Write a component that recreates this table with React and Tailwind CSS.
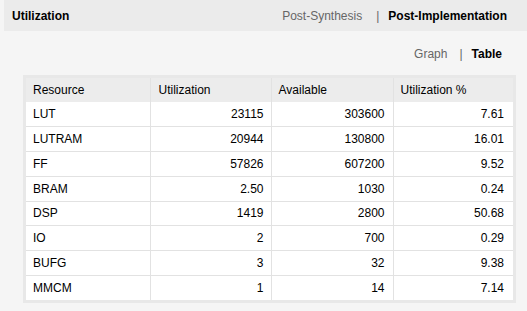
const rows = [
  ["LUT", "23115", "303600", "7.61"],
  ["LUTRAM", "20944", "130800", "16.01"],
  ["FF", "57826", "607200", "9.52"],
  ["BRAM", "2.50", "1030", "0.24"],
  ["DSP", "1419", "2800", "50.68"],
  ["IO", "2", "700", "0.29"],
  ["BUFG", "3", "32", "9.38"],
  ["MMCM", "1", "14", "7.14"],
];

const App = () => {
  return (
    <div className="w-[527px] h-[311px] bg-[#f5f5f5] font-['Liberation_Sans',Arial,sans-serif] text-[12px] text-[#000] overflow-hidden">
      {/* Header */}
      <div className="ml-[4px] h-[31px] bg-[#ebebeb] flex items-center justify-between pl-[8px] pr-[20px]">
        <span className="font-bold">Utilization</span>
        <div className="flex items-center">
          <span className="text-[#666]">Post-Synthesis</span>
          <span className="text-[#666] ml-[14px] mr-[9px]">|</span>
          <span className="font-bold">Post-Implementation</span>
        </div>
      </div>

      {/* View toggle */}
      <div className="h-[44px] flex items-center justify-end pr-[25px] pt-[2px]">
        <span className="text-[#666]">Graph</span>
        <span className="text-[#666] ml-[12px] mr-[9px]">|</span>
        <span className="font-bold">Table</span>
      </div>

      {/* Table */}
      <div className="ml-[23px] w-[493px] border-[3px] border-[#e8e8e8] bg-white">
        <table className="w-full table-fixed border-collapse">
          <thead>
            <tr className="bg-[#ececec] h-[24px]">
              <th className="w-[124px] text-left font-normal pl-[7px] border-r border-[#e2e2e2]">Resource</th>
              <th className="w-[121px] text-left font-normal pl-[8px] border-r border-[#e2e2e2]">Utilization</th>
              <th className="w-[122px] text-left font-normal pl-[7px] border-r border-[#e2e2e2]">Available</th>
              <th className="text-left font-normal pl-[7px]">Utilization %</th>
            </tr>
          </thead>
          <tbody>
            {rows.map((r, i) => (
              <tr key={r[0]} className={`h-[24.75px] ${i > 0 ? "border-t border-[#e2e2e2]" : ""}`}>
                <td className="pl-[7px] border-r border-[#e2e2e2]">{r[0]}</td>
                <td className="text-right pr-[7px] border-r border-[#e2e2e2]">{r[1]}</td>
                <td className="text-right pr-[8px] border-r border-[#e2e2e2]">{r[2]}</td>
                <td className="text-right pr-[9px]">{r[3]}</td>
              </tr>
            ))}
          </tbody>
        </table>
      </div>
    </div>
  );
};

export default App;
